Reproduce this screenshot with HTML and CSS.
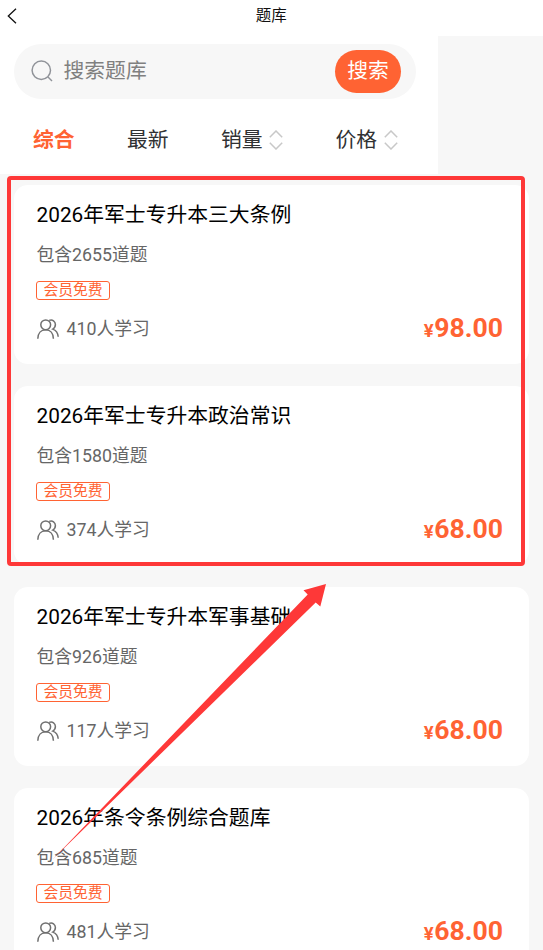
FILE: index.html
```
<!DOCTYPE html>
<html lang="zh-CN">
<head>
<meta charset="utf-8">
<meta name="viewport" content="width=device-width, initial-scale=1">
<title>题库</title>
<link rel="stylesheet" href="styles.css">
</head>
<body>
<svg class="sprite" width="0" height="0" aria-hidden="true">
  <symbol id="sort" viewBox="0 0 14 20"><path d="M.8 7.200 7 1l6.200 6.200M.8 12.800 7 19l6.200-6.200"/></symbol>
  <symbol id="people" viewBox="0 0 22 20"><circle cx="8.700" cy="5.800" r="4.900"/><path d="M.8 19.800C.9 14.300 4 10.800 8.700 10.800s7.600 3.500 7.700 9M12.200 1.400c3.300-1.300 6.200 1 6.200 4.200 0 1.900-1 3.600-2.600 4.500 3.200 1.200 5.100 3.800 5.400 7.600"/></symbol>
</svg>
<header class="titlebar">
  <svg class="back" width="10" height="16" viewBox="0 0 10 16"><path d="M9 .7 1.300 8 9 15.300"/></svg>
  <h1>题库</h1>
</header>
<section class="panel">
  <div class="search">
    <svg class="search-icon" width="22" height="22" viewBox="0 0 22 22"><circle cx="10.300" cy="10.300" r="9.200"/><path d="m17 17 4 4"/></svg>
    <span class="placeholder">搜索题库</span>
    <button class="search-btn">搜索</button>
  </div>
  <nav class="filters">
    <span class="filter active">综合</span>
    <span class="filter">最新</span>
    <span class="filter">销量<svg class="sort"><use href="#sort"/></svg></span>
    <span class="filter">价格<svg class="sort"><use href="#sort"/></svg></span>
  </nav>
</section>
<main class="list">
  <article class="card">
    <h2>2026年军士专升本三大条例</h2>
    <p class="count">包含2655道题</p>
    <span class="badge">会员免费</span>
    <div class="foot"><svg class="people"><use href="#people"/></svg><span class="learners">410人学习</span><strong class="price"><small>¥</small>98.00</strong></div>
  </article>
  <article class="card">
    <h2>2026年军士专升本政治常识</h2>
    <p class="count">包含1580道题</p>
    <span class="badge">会员免费</span>
    <div class="foot"><svg class="people"><use href="#people"/></svg><span class="learners">374人学习</span><strong class="price"><small>¥</small>68.00</strong></div>
  </article>
  <article class="card">
    <h2>2026年军士专升本军事基础</h2>
    <p class="count">包含926道题</p>
    <span class="badge">会员免费</span>
    <div class="foot"><svg class="people"><use href="#people"/></svg><span class="learners">117人学习</span><strong class="price"><small>¥</small>68.00</strong></div>
  </article>
  <article class="card">
    <h2>2026年条令条例综合题库</h2>
    <p class="count">包含685道题</p>
    <span class="badge">会员免费</span>
    <div class="foot"><svg class="people"><use href="#people"/></svg><span class="learners">481人学习</span><strong class="price"><small>¥</small>68.00</strong></div>
  </article>
</main>
<div class="highlight"></div>
<svg class="arrow" width="280" height="282" viewBox="0 0 280 282"><path d="M3 279 257.700 14.500 253.500 10.300 276 4 270.300 26.500 265.700 22.500Z"/></svg>
</body>
</html>
```
FILE: styles.css
```
* { box-sizing: border-box; }
body {
  position: relative;
  margin: 0;
  height: 950px;
  overflow: hidden;
  background: #f7f7f7;
  color: #000;
  font-family: Roboto, "Noto Sans CJK SC", sans-serif;
}
h1, h2, p { margin: 0; font-weight: 400; }
svg { display: block; flex: none; fill: none; }
.sprite { position: absolute; }

.titlebar {
  display: grid;
  grid-template-columns: 1fr auto 1fr;
  height: 36px;
  padding: 0 7px 0 6.500px;
  background: #fff;
}
.titlebar h1 { font-size: 15.500px; line-height: 32px; color: #111; }
.back { margin-top: 8px; stroke: #111; stroke-width: 1.300; }

.panel { width: 438px; height: 138px; padding: 8px 22px 0 14px; background: #fff; }
.search {
  display: flex;
  align-items: center;
  height: 55px;
  padding: 0 15px 0 17px;
  border-radius: 28px;
  background: #f7f7f7;
}
.search-icon { margin-top: -1px; stroke: #909399; stroke-width: 1.500; }
.placeholder { margin: 0 0 2px 10.500px; font-size: 20.800px; line-height: 30px; color: #808080; }
.search-btn {
  width: 66px;
  height: 43px;
  margin-left: auto;
  padding: 0 0 2px;
  border: 0;
  border-radius: 22px;
  background: #ff6333;
  color: #fff;
  font: inherit;
  font-size: 20.800px;
  line-height: 30px;
}
.filters { display: grid; grid-template-columns: 94px 94px 114.500px auto; padding: 26px 0 0 19px; }
.filter { display: flex; align-items: center; font-size: 20.800px; line-height: 30px; color: #303133; }
.filter.active { font-weight: 700; color: #ff6333; }
.sort { width: 14px; height: 20px; margin: -1px 0 0 6.500px; stroke: #c8c8c8; stroke-width: 1.500; }

.list { display: flex; flex-direction: column; gap: 22px; padding: 11px 14px 0; }
.card { flex: none; height: 179px; padding: 15px 26px 0 22.500px; border-radius: 14px; background: #fff; }
.card h2 { font-size: 20.800px; line-height: 30px; }
.count { margin-top: 12px; font-size: 17.760px; line-height: 26px; color: #666; }
.badge {
  display: block;
  width: 74px;
  height: 19px;
  margin-top: 13px;
  margin-left: -.5px;
  border: 1px solid #ff6333;
  border-radius: 3px;
  font-size: 14.800px;
  line-height: 17px;
  text-align: center;
  color: #ff6333;
}
.foot { display: flex; align-items: center; height: 30px; margin-top: 14px; font-size: 17.760px; color: #666; }
.people { width: 22px; height: 20px; margin-right: 8px; stroke: #707070; stroke-width: 1.500; }
.learners { margin-bottom: 1px; line-height: 26px; }
.price { margin-left: auto; font-size: 26.600px; line-height: 30px; color: #ff6333; }
.price small { margin-right: .5px; font-size: 18.500px; }

.highlight {
  position: absolute;
  left: 7px;
  top: 176px;
  width: 518px;
  height: 390px;
  border: 4px solid #fe3838;
  border-radius: 4px;
}
.arrow { position: absolute; left: 50px; top: 580px; fill: #fe3838; }
```
